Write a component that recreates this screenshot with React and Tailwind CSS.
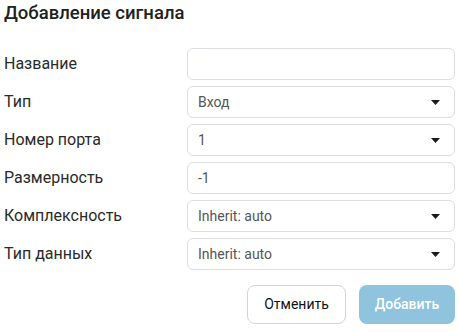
import React from 'react';

const fields = [
  { label: 'Название', value: '', select: false },
  { label: 'Тип', value: 'Вход', select: true },
  { label: 'Номер порта', value: '1', select: true },
  { label: 'Размерность', value: '-1', select: false },
  { label: 'Комплексность', value: 'Inherit: auto', select: true },
  { label: 'Тип данных', value: 'Inherit: auto', select: true },
];

function Caret() {
  return (
    <svg width="9" height="5" viewBox="0 0 9 5" className="shrink-0">
      <path d="M0 0 H9 L4.5 5 Z" fill="#1a1a1a" />
    </svg>
  );
}

export default function App() {
  return (
    <div className="w-[458px] h-[332px] bg-white pl-[4px] pr-[3px] font-['Roboto',sans-serif] text-[#222]">
      {/* Header */}
      <h1 className="h-[26px] pt-[1px] text-[18.5px] leading-[24px] font-medium text-[#212121]">
        Добавление сигнала
      </h1>

      {/* Form */}
      <div className="mt-[22px] flex flex-col gap-[6px]">
        {fields.map((f, i) => (
          <div key={i} className="flex items-center h-[32px]">
            <div className="w-[183px] text-[16px] leading-[18px] font-normal text-[#2a2a2a]">{f.label}</div>
            <div className="flex-1 h-[32px] flex items-center justify-between border border-[#dadde1] rounded-[6px] pl-[10px] pr-[14px]">
              <span className="text-[14px] text-[#555]">{f.value}</span>
              {f.select && <Caret />}
            </div>
          </div>
        ))}
      </div>

      {/* Buttons */}
      <div className="mt-[15px] flex justify-end gap-[13px]">
        <button className="w-[99px] h-[39px] border border-[#d4d4d4] rounded-[8px] bg-white text-[14px] text-[#111]">
          Отменить
        </button>
        <button className="w-[96px] h-[39px] rounded-[8px] bg-[#8fc3de] text-[14px] font-medium text-white">
          Добавить
        </button>
      </div>
    </div>
  );
}
